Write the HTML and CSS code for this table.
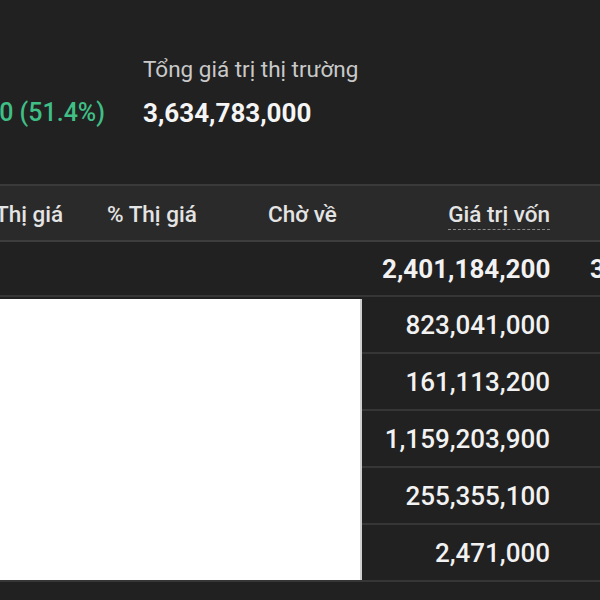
FILE: index.html
```html
<!DOCTYPE html>
<html lang="vi">
<head>
<meta charset="utf-8">
<link rel="stylesheet" href="styles.css">
</head>
<body>
<div class="page">
  <section class="summary">
    <div class="stat stat-first">
      <div class="stat-label">&nbsp;</div>
      <div class="stat-value green"><span>+1,233,598,800 (51.4%)</span></div>
    </div>
    <div class="stat">
      <div class="stat-label">Tổng giá trị thị trường</div>
      <div class="stat-value">3,634,783,000</div>
    </div>
  </section>

  <section class="table">
    <div class="row head">
      <div class="cell c1">Thị giá</div>
      <div class="cell c2">% Thị giá</div>
      <div class="cell c3">Chờ về</div>
      <div class="cell c4"><span class="dotted">Giá trị vốn</span></div>
      <div class="cell c5"></div>
    </div>
    <div class="row total">
      <div class="cell c1"></div>
      <div class="cell c2"></div>
      <div class="cell c3"></div>
      <div class="cell c4">2,401,184,200</div>
      <div class="cell c5">3,634,783,000</div>
    </div>
    <div class="body">
      <div class="row"><div class="cell c1"></div><div class="cell c2"></div><div class="cell c3"></div><div class="cell c4">823,041,000</div><div class="cell c5"></div></div>
      <div class="row"><div class="cell c1"></div><div class="cell c2"></div><div class="cell c3"></div><div class="cell c4">161,113,200</div><div class="cell c5"></div></div>
      <div class="row"><div class="cell c1"></div><div class="cell c2"></div><div class="cell c3"></div><div class="cell c4">1,159,203,900</div><div class="cell c5"></div></div>
      <div class="row"><div class="cell c1"></div><div class="cell c2"></div><div class="cell c3"></div><div class="cell c4">255,355,100</div><div class="cell c5"></div></div>
      <div class="row"><div class="cell c1"></div><div class="cell c2"></div><div class="cell c3"></div><div class="cell c4">2,471,000</div><div class="cell c5"></div></div>
      <div class="redact"></div>
    </div>
  </section>
</div>
</body>
</html>
```
FILE: styles.css
```css
* { box-sizing: border-box; }
html, body { margin: 0; padding: 0; }
body {
  background: #212121;
  font-family: Roboto, "Noto Sans", sans-serif;
  color: #f2f2f2;
  width: 600px;
  height: 600px;
  overflow: hidden;
}
.page { width: 600px; }

.summary {
  display: flex;
  height: 184px;
  padding-top: 54px;
  gap: 40px;
}
.stat { display: flex; flex-direction: column; gap: 12px; }
.stat-first { width: 105px; overflow: hidden; }
.stat-label {
  font-size: 22.5px;
  color: #c9c9c9;
  line-height: 30px;
  white-space: nowrap;
  margin-left: -2px;
}
.stat-value {
  font-size: 26px;
  font-weight: 700;
  line-height: 34px;
  white-space: nowrap;
  color: #f5f5f5;
  margin-left: -2px;
}
.stat-value.green {
  display: flex;
  justify-content: flex-end;
  color: #3fbf86;
  font-weight: 500;
  font-size: 25px;
  margin-left: 0;
}

.table { border-top: 2px solid #3a3a3a; }
.row {
  display: grid;
  grid-template-columns: 106px 159px 120px 168px 1fr;
  height: 57px;
  align-items: center;
  border-bottom: 2px solid #363636;
  margin-left: -3px;
  padding-top: 1px;
}
.row.head {
  height: 56px;
  background: #2a2a2a;
  border-bottom: 2px solid #3d3d3d;
  font-size: 22.5px;
  color: #e4e4e4;
  font-weight: 500;
}
.row.total { height: 55px; }
.cell { white-space: nowrap; overflow: visible; }
.head .c1 { margin-left: -2px; }
.head .c2 { padding-left: 4px; }
.head .c3 { padding-left: 6px; }
.c4 { text-align: right; }
.c5 { padding-left: 40px; }
.dotted {
  border-bottom: 1px dashed #8a8a8a;
  padding-bottom: 2px;
}
.row.total, .body .row {
  font-size: 26px;
  font-weight: 700;
}
.body .row { font-weight: 500; }
.body { position: relative; }
.redact {
  position: absolute;
  left: 0;
  top: 2px;
  width: 362px;
  bottom: 2px;
  background: #ffffff;
  border-right: 2px solid #d0d0d0;
}
```
